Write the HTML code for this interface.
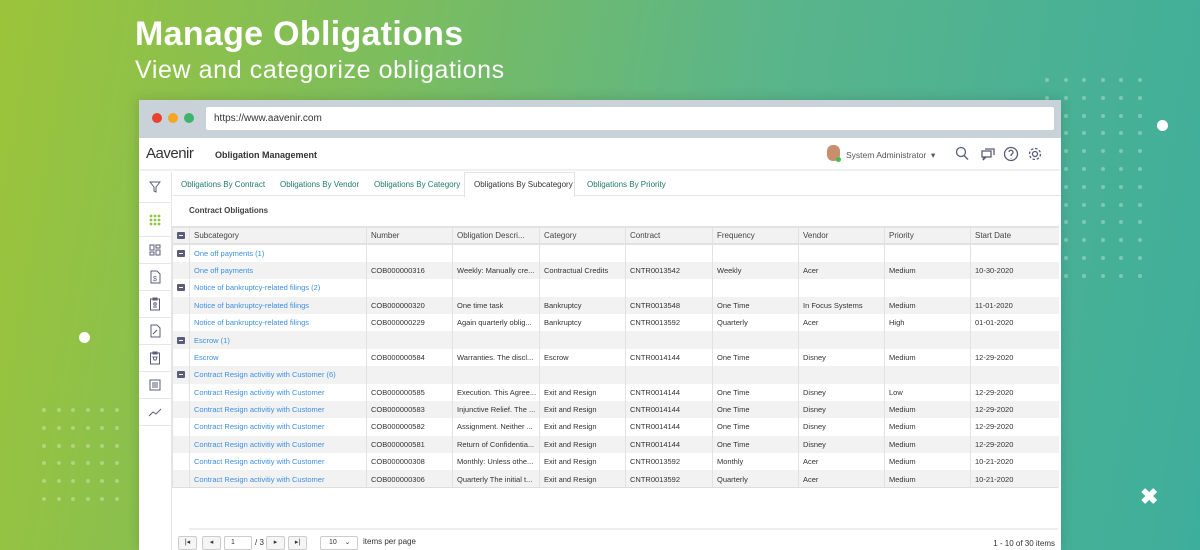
<!DOCTYPE html>
<html><head><meta charset="utf-8"><style>
*{box-sizing:border-box;margin:0;padding:0}
html{width:1200px;height:550px;overflow:hidden}
body{width:1200px;height:550px;overflow:hidden;font-family:"Liberation Sans",sans-serif;position:relative;
background:linear-gradient(100deg,#9cc43a 0%,#7dbd5c 30%,#5ab58a 60%,#3eae9c 100%);}
.h1{position:absolute;left:135px;top:15px;color:#fff;font-size:34px;font-weight:bold;letter-spacing:0.3px}
.h2{position:absolute;left:135px;top:56px;color:#fff;font-size:25px;font-weight:normal;letter-spacing:0.6px}
.dot{position:absolute;width:4px;height:4px;border-radius:50%;background:rgba(255,255,255,.3)}
.win{position:absolute;left:139px;top:100px;width:922px;height:450px;background:#fff;box-shadow:0 0 12px rgba(0,0,0,.15);overflow:hidden}
.bar{height:38px;background:#c9d1d9;position:relative}
.bar .c{position:absolute;top:13px;width:10px;height:10px;border-radius:50%}
.url{position:absolute;left:67px;top:7px;width:848px;height:23px;background:#fff;border-radius:2px;font-size:10px;color:#333;padding:6px 8px}
.hdr{height:33px;position:relative;border-bottom:2px solid #eef0f5}
.side{position:absolute;left:0;top:72px;width:33px;height:400px;border-right:1px solid #e6e6e6}
.side div{border-bottom:1px solid #e6e6e6;display:flex;align-items:center;justify-content:center}
.tabs{position:absolute;left:34px;top:72px;right:0;height:24px;border-bottom:1px solid #e3e3e3;font-size:8px}
.tabs span{position:absolute;top:8px;color:#1f7a6a}
.tab{position:absolute;left:291px;top:0;width:111px;height:25px;border:1px solid #e3e3e3;border-bottom:none;background:#fff}
table{border-collapse:collapse;position:absolute;left:33px;top:126px;font-size:7.5px;table-layout:fixed;width:886px}
td,th{height:17.4px;border-left:1px solid #e2e2e2;padding-left:4px;white-space:nowrap;overflow:hidden;text-align:left;color:#333}
th{font-weight:normal;color:#444;background:#f2f2f2;font-size:8px;border-bottom:2px solid #e2e2e2;border-top:2px solid #e2e2e2}
tr.g td{background:#fff}
tr:nth-child(odd) td{background:#f2f2f2}
td.l{color:#3c8fe0}
.m{display:inline-block;width:8px;height:7px;background:#5a5c78;border-radius:1px;position:relative;top:1px}
.m:after{content:"";position:absolute;left:2px;top:3px;width:4px;height:1px;background:#fff}
.pb{position:absolute;top:436px;height:14px;border:1px solid #ccc;border-radius:2px;background:#f5f5f5;font-size:7px;text-align:center;line-height:12px;color:#333}
</style></head><body>
<div class="h1">Manage Obligations</div>
<div class="h2">View and categorize obligations</div>
<div id="dots"></div>
<div style="position:absolute;left:1157px;top:120px;width:11px;height:11px;border-radius:50%;background:#fff"></div>
<div style="position:absolute;left:79px;top:332px;width:11px;height:11px;border-radius:50%;background:#fff"></div>
<div style="position:absolute;left:1140px;top:484px;color:#fff;font-size:22px;font-weight:bold">✖</div>
<div class="win">
 <div class="bar"><div class="c" style="left:13px;background:#e8412f"></div><div class="c" style="left:29px;background:#f5a623"></div><div class="c" style="left:45px;background:#3fb36b"></div><div class="url">https://www.aavenir.com</div></div>
 <div class="hdr">
  <div style="position:absolute;left:7px;top:7px;font-size:15px;color:#333;letter-spacing:-0.5px">Aavenir</div>
  <div style="position:absolute;left:76px;top:12px;font-size:9px;color:#333;font-weight:bold">Obligation Management</div>
  <div style="position:absolute;left:688px;top:7px;width:13px;height:16px;border-radius:6px;background:#c98e6e"></div>
  <div style="position:absolute;left:697px;top:19px;width:5px;height:5px;border-radius:50%;background:#3bc14a"></div>
  <div style="position:absolute;left:707px;top:12px;font-size:8.5px;color:#555">System Administrator &nbsp;▾</div>
  <svg style="position:absolute;left:815px;top:8px" width="90" height="16" fill="none" stroke="#5a5c78" stroke-width="1.3">
   <circle cx="7" cy="6" r="4.5"/><path d="M10 9.5l4 4"/>
   <rect x="28" y="5" width="9" height="6"/><path d="M31 3h9v6M30 11l-1 3 3-3"/>
   <circle cx="57" cy="8" r="6.5"/><path d="M55 6a2 2 0 1 1 3 2c-1 .5-1 1-1 2M57 12v.5"/>
   <circle cx="81" cy="8" r="2.5"/><circle cx="81" cy="8" r="5.5" stroke-dasharray="2.5 1.8"/>
  </svg>
 </div>
 <div class="side">
  <div style="height:31px"><svg width="12" height="12" fill="none" stroke="#5a5c78"><path d="M1 1h10L7 6v5L5 10V6z"/></svg></div>
  <div style="height:34px"><svg width="12" height="12" fill="#8dc63f"><g id="r"><circle cx="2" cy="2" r="1.4"/><circle cx="6" cy="2" r="1.4"/><circle cx="10" cy="2" r="1.4"/></g><use href="#r" y="4"/><use href="#r" y="8"/></svg></div>
  <div style="height:27px"><svg width="12" height="12" fill="none" stroke="#5a5c78"><rect x="1" y="1" width="4" height="5"/><rect x="7" y="1" width="4" height="3"/><rect x="1" y="8" width="4" height="3"/><rect x="7" y="6" width="4" height="5"/></svg></div>
  <div style="height:27px"><svg width="12" height="14" fill="none" stroke="#5a5c78"><path d="M2 1h6l3 3v9H2z"/><text x="4" y="11" font-size="7" fill="#5a5c78" stroke="none">$</text></svg></div>
  <div style="height:27px"><svg width="12" height="14" fill="none" stroke="#5a5c78"><rect x="1.5" y="2" width="9" height="11"/><path d="M4 1h4v2H4z"/><circle cx="6" cy="7" r="1.3"/><path d="M4 10h4"/></svg></div>
  <div style="height:27px"><svg width="12" height="14" fill="none" stroke="#5a5c78"><path d="M2 1h6l3 3v9H2z"/><path d="M4 10l4-4"/></svg></div>
  <div style="height:27px"><svg width="12" height="14" fill="none" stroke="#5a5c78"><rect x="1.5" y="2" width="9" height="11"/><path d="M4 1h4v2H4zM4 6h4l-1 3H5z"/></svg></div>
  <div style="height:27px"><svg width="12" height="12" fill="none" stroke="#5a5c78"><rect x="1" y="1" width="10" height="10"/><path d="M3 4h6M3 6h6M3 8h6"/></svg></div>
  <div style="height:27px"><svg width="14" height="10" fill="none" stroke="#5a5c78"><path d="M1 9l4-4 3 2 5-5"/></svg></div>
 </div>
 <div class="tabs"><div class="tab"></div>
  <span style="left:8px">Obligations By Contract</span><span style="left:107px">Obligations By Vendor</span><span style="left:201px">Obligations By Category</span><span style="left:301px;color:#333">Obligations By Subcategory</span><span style="left:414px">Obligations By Priority</span>
 </div>
 <div style="position:absolute;left:50px;top:106px;font-size:8px;font-weight:bold;color:#444">Contract Obligations</div>
 <table>
  <colgroup><col style="width:17px"><col style="width:177px"><col style="width:86px"><col style="width:87px"><col style="width:86px"><col style="width:87px"><col style="width:86px"><col style="width:86px"><col style="width:86px"><col style="width:88px"></colgroup>
  <tr><th><span class="m"></span></th><th>Subcategory</th><th>Number</th><th>Obligation Descri...</th><th>Category</th><th>Contract</th><th>Frequency</th><th>Vendor</th><th>Priority</th><th>Start Date</th></tr>
  <tr class="g"><td><span class="m"></span></td><td class="l">One off payments (1)</td><td></td><td></td><td></td><td></td><td></td><td></td><td></td><td></td></tr>
  <tr><td></td><td class="l">One off payments</td><td>COB000000316</td><td>Weekly: Manually cre...</td><td>Contractual Credits</td><td>CNTR0013542</td><td>Weekly</td><td>Acer</td><td>Medium</td><td>10-30-2020</td></tr>
  <tr class="g"><td><span class="m"></span></td><td class="l">Notice of bankruptcy-related filings (2)</td><td></td><td></td><td></td><td></td><td></td><td></td><td></td><td></td></tr>
  <tr><td></td><td class="l">Notice of bankruptcy-related filings</td><td>COB000000320</td><td>One time task</td><td>Bankruptcy</td><td>CNTR0013548</td><td>One Time</td><td>In Focus Systems</td><td>Medium</td><td>11-01-2020</td></tr>
  <tr class="g"><td></td><td class="l">Notice of bankruptcy-related filings</td><td>COB000000229</td><td>Again quarterly oblig...</td><td>Bankruptcy</td><td>CNTR0013592</td><td>Quarterly</td><td>Acer</td><td>High</td><td>01-01-2020</td></tr>
  <tr><td><span class="m"></span></td><td class="l">Escrow (1)</td><td></td><td></td><td></td><td></td><td></td><td></td><td></td><td></td></tr>
  <tr class="g"><td></td><td class="l">Escrow</td><td>COB000000584</td><td>Warranties. The discl...</td><td>Escrow</td><td>CNTR0014144</td><td>One Time</td><td>Disney</td><td>Medium</td><td>12-29-2020</td></tr>
  <tr><td><span class="m"></span></td><td class="l">Contract Resign activitiy with Customer (6)</td><td></td><td></td><td></td><td></td><td></td><td></td><td></td><td></td></tr>
  <tr class="g"><td></td><td class="l">Contract Resign activitiy with Customer</td><td>COB000000585</td><td>Execution. This Agree...</td><td>Exit and Resign</td><td>CNTR0014144</td><td>One Time</td><td>Disney</td><td>Low</td><td>12-29-2020</td></tr>
  <tr><td></td><td class="l">Contract Resign activitiy with Customer</td><td>COB000000583</td><td>Injunctive Relief. The ...</td><td>Exit and Resign</td><td>CNTR0014144</td><td>One Time</td><td>Disney</td><td>Medium</td><td>12-29-2020</td></tr>
  <tr class="g"><td></td><td class="l">Contract Resign activitiy with Customer</td><td>COB000000582</td><td>Assignment. Neither ...</td><td>Exit and Resign</td><td>CNTR0014144</td><td>One Time</td><td>Disney</td><td>Medium</td><td>12-29-2020</td></tr>
  <tr><td></td><td class="l">Contract Resign activitiy with Customer</td><td>COB000000581</td><td>Return of Confidentia...</td><td>Exit and Resign</td><td>CNTR0014144</td><td>One Time</td><td>Disney</td><td>Medium</td><td>12-29-2020</td></tr>
  <tr class="g"><td></td><td class="l">Contract Resign activitiy with Customer</td><td>COB000000308</td><td>Monthly: Unless othe...</td><td>Exit and Resign</td><td>CNTR0013592</td><td>Monthly</td><td>Acer</td><td>Medium</td><td>10-21-2020</td></tr>
  <tr><td></td><td class="l">Contract Resign activitiy with Customer</td><td>COB000000306</td><td>Quarterly The initial t...</td><td>Exit and Resign</td><td>CNTR0013592</td><td>Quarterly</td><td>Acer</td><td>Medium</td><td>10-21-2020</td></tr>
 </table>
 <div style="position:absolute;left:33px;top:387px;width:886px;border-top:1px solid #ddd"></div>
 <div style="position:absolute;left:50px;top:428px;width:869px;border-top:2px solid #eee"></div>
 <div class="pb" style="left:39px;width:19px">|◂</div><div class="pb" style="left:63px;width:19px">◂</div>
 <div class="pb" style="left:85px;width:28px;background:#fff;text-align:left;padding-left:6px">1</div>
 <div style="position:absolute;left:116px;top:438px;font-size:8px;color:#333">/ 3</div>
 <div class="pb" style="left:127px;width:19px">▸</div><div class="pb" style="left:149px;width:19px">▸|</div>
 <div class="pb" style="left:181px;width:38px;background:#fff;text-align:left;padding-left:8px">10 &nbsp;&nbsp;&nbsp;⌄</div>
 <div style="position:absolute;left:224px;top:437px;font-size:8px;color:#333">items per page</div>
 <div style="position:absolute;right:6px;top:439px;font-size:8px;color:#333">1 - 10 of 30 items</div>
</div>
<script>
var d=document.getElementById('dots'),h='';
for(var i=0;i<6;i++)for(var j=0;j<12;j++)h+='<div class="dot" style="left:'+(1045+i*18.5)+'px;top:'+(78+j*17.8)+'px"></div>';
for(var i=0;i<6;i++)for(var j=0;j<6;j++)h+='<div class="dot" style="left:'+(42+i*14.5)+'px;top:'+(408+j*17.8)+'px"></div>';
d.innerHTML=h;
</script>
</body></html>
